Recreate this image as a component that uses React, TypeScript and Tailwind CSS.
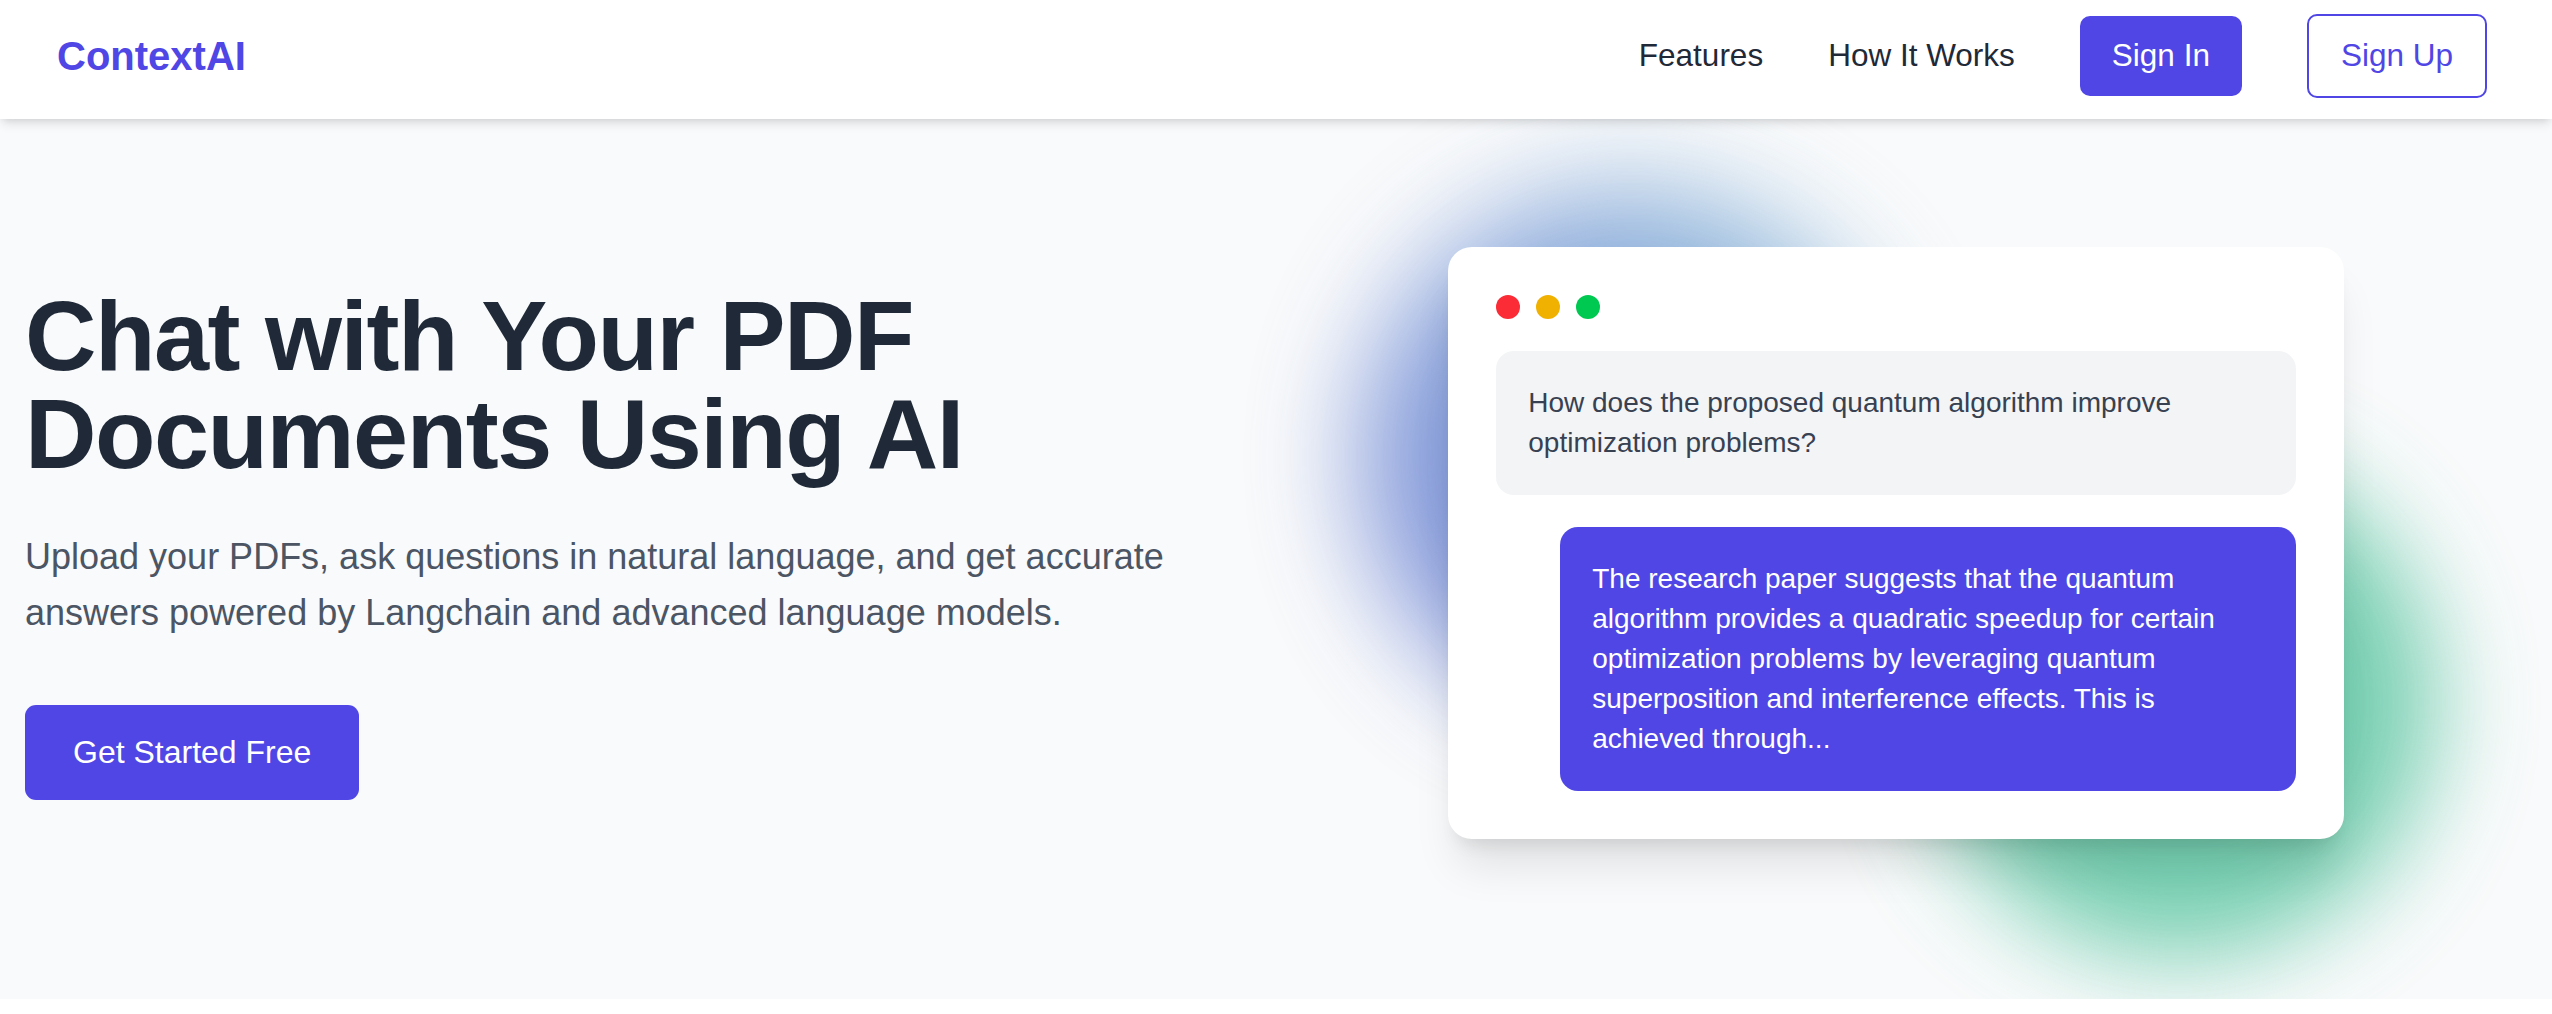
import React from 'react';

// ─── Header ───────────────────────────────────────────────────────────────────

const Header = () => (
  <header className="relative z-20 flex h-[119px] items-center justify-between bg-white pl-[57px] pr-[65px] pb-[7px] shadow-[0_7px_10px_-2px_rgba(0,0,0,0.1),0_3px_7px_-3px_rgba(0,0,0,0.1)]">
    <a href="#" className="text-[40px] font-bold leading-none text-[#4f46e5]">
      ContextAI
    </a>
    <nav className="flex items-center gap-[65px] text-[31.5px]">
      <a href="#features" className="text-[#1f2937]">Features</a>
      <a href="#how" className="text-[#1f2937]">How It Works</a>
      <button className="h-[80px] rounded-[10px] bg-[#4f46e5] px-[32px] text-white">Sign In</button>
      <button className="h-[84px] rounded-[10px] border-2 border-[#4f46e5] bg-white px-[32px] text-[#4f46e5]">
        Sign Up
      </button>
    </nav>
  </header>
);

// ─── ChatPreview ──────────────────────────────────────────────────────────────

const ChatPreview = () => (
  <div className="relative w-[896px]">
    <div className="absolute left-[-86px] top-[-58px] h-[536px] w-[536px] rounded-full bg-linear-to-tr from-[#6476d0] via-[#7190d4] to-[#86bcd4] opacity-85 blur-[56px]" />
    <div className="absolute left-[476px] top-[200px] h-[510px] w-[510px] rounded-full bg-[#5cc6a2] opacity-85 blur-[50px]" />

    <div className="relative z-10 rounded-[24px] bg-white p-[48px] shadow-[0_35px_44px_-9px_rgba(0,0,0,0.1),0_14px_18px_-10px_rgba(0,0,0,0.1)]">
      <div className="flex gap-[16px]">
        <span className="h-[24px] w-[24px] rounded-full bg-red-500" />
        <span className="h-[24px] w-[24px] rounded-full bg-yellow-500" />
        <span className="h-[24px] w-[24px] rounded-full bg-green-500" />
      </div>

      <div className="mt-[32px] rounded-[18px] bg-[#f3f4f6] p-[32px] text-[28px] leading-[40px] text-[#374151]">
        How does the proposed quantum algorithm improve optimization problems?
      </div>

      <div className="ml-[64px] mt-[32px] rounded-[18px] bg-[#4f46e5] p-[32px] text-[28px] leading-[40px] text-white">
        The research paper suggests that the quantum algorithm provides a quadratic speedup for certain
        optimization problems by leveraging quantum superposition and interference effects. This is
        achieved through...
      </div>
    </div>
  </div>
);

// ─── Hero ─────────────────────────────────────────────────────────────────────

const Hero = () => (
  <section className="grid grid-cols-2 items-center overflow-hidden bg-[#f9fafb] pl-[25px] pr-[32px] pt-[128px] pb-[160px]">
    <div>
      <h1 className="text-[99px] font-bold leading-[98px] tracking-[-0.015em] text-[#1f2937]">
        Chat with Your PDF Documents Using AI
      </h1>
      <p className="mt-[46px] max-w-[1176px] text-[36px] leading-[56px] text-[#4b5563]">
        Upload your PDFs, ask questions in natural language, and get accurate answers powered by
        Langchain and advanced language models.
      </p>
      <button className="mt-[64px] h-[95px] rounded-[11px] bg-[#4f46e5] px-[48px] text-[32px] font-medium text-white">
        Get Started Free
      </button>
    </div>
    <div className="flex justify-center">
      <ChatPreview />
    </div>
  </section>
);

export default function App() {
  return (
    <div className="min-h-screen bg-white font-['Liberation_Sans',Arial,Helvetica,sans-serif]">
      <Header />
      <Hero />
    </div>
  );
}
